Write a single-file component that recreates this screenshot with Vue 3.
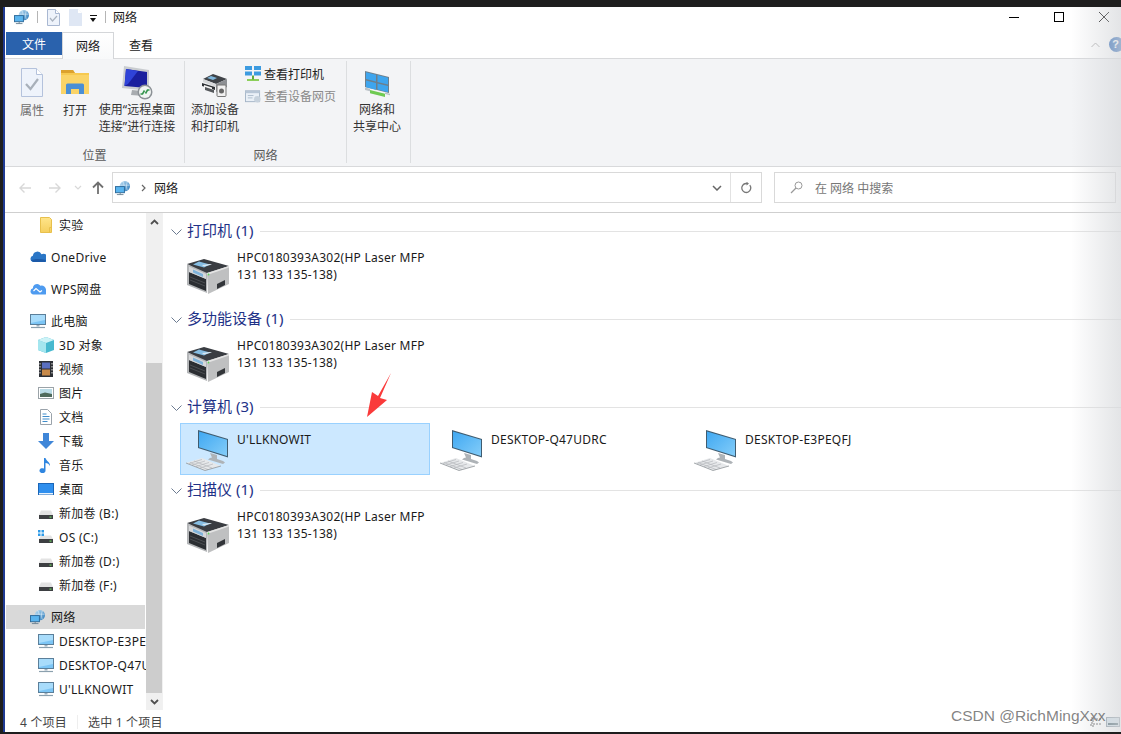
<script setup>
const quick = ['doc', 'page']
const tree = [
  { label: '实验', icon: 'folder', level: 2, gap: 8 },
  { label: 'OneDrive', icon: 'cloud', level: 1, gap: 8 },
  { label: 'WPS网盘', icon: 'wps', level: 1, gap: 8 },
  { label: '此电脑', icon: 'pc', level: 1 },
  { label: '3D 对象', icon: 'cube', level: 2 },
  { label: '视频', icon: 'film', level: 2 },
  { label: '图片', icon: 'picture', level: 2 },
  { label: '文档', icon: 'text', level: 2 },
  { label: '下载', icon: 'down', level: 2 },
  { label: '音乐', icon: 'note', level: 2 },
  { label: '桌面', icon: 'desk', level: 2 },
  { label: '新加卷 (B:)', icon: 'drive', level: 2 },
  { label: 'OS (C:)', icon: 'osdrive', level: 2 },
  { label: '新加卷 (D:)', icon: 'drive', level: 2 },
  { label: '新加卷 (F:)', icon: 'drive', level: 2, gap: 8 },
  { label: '网络', icon: 'net', level: 1, active: true },
  { label: 'DESKTOP-E3PEQFJ', icon: 'pc', level: 2 },
  { label: 'DESKTOP-Q47UDRC', icon: 'pc', level: 2 },
  { label: "U'LLKNOWIT", icon: 'pc', level: 2 }
]
const printer = { icon: 'printer', lines: ['HPC0180393A302(HP Laser MFP', '131 133 135-138)'] }
const groups = [
  { title: '打印机 (1)', items: [printer], cls: 'g-print' },
  { title: '多功能设备 (1)', items: [printer], cls: 'g-print' },
  {
    title: '计算机 (3)',
    cls: 'g-comp',
    items: [
      { icon: 'computer', lines: ["U'LLKNOWIT"], selected: true },
      { icon: 'computer', lines: ['DESKTOP-Q47UDRC'] },
      { icon: 'computer', lines: ['DESKTOP-E3PEQFJ'] }
    ]
  },
  { title: '扫描仪 (1)', items: [printer], cls: 'g-print' }
]
</script>

<template>
  <div class="screen">
    <svg class="defs" width="0" height="0" aria-hidden="true">
      <defs>
        <linearGradient id="scr" x1="0" y1="0" x2="1" y2="1"><stop offset="0" stop-color="#3fa8f2"/><stop offset="1" stop-color="#84cdf9"/></linearGradient>
        <linearGradient id="fold" x1="0" y1="0" x2="0" y2="1"><stop offset="0" stop-color="#ffe58a"/><stop offset="1" stop-color="#f5cf5e"/></linearGradient>
        <linearGradient id="glob" x1="0" y1="0" x2="1" y2="1"><stop offset="0" stop-color="#bfe0f5"/><stop offset="1" stop-color="#2a78b8"/></linearGradient>
        <symbol id="net" viewBox="0 0 17 16">
          <circle cx="10.500" cy="6" r="5.500" fill="url(#glob)"/>
          <path d="M8 1c2 2 2 6 1 9M13 1.500c-1 3-1 6 0 9M5.500 5h10" stroke="#e8f4fb" stroke-width=".6" fill="none"/>
          <rect x=".5" y="6.500" width="9.500" height="6.500" fill="#5ab4ee" stroke="#2d6a9a"/>
          <path d="M2 15h7M5.500 13v2" stroke="#6f8494"/>
        </symbol>
        <symbol id="doc" viewBox="0 0 13 17">
          <path d="M.5.500h8l4 4v12H.5z" fill="#eef3fb" stroke="#a9b8d2"/>
          <path d="M8.500.500v4h4" fill="#fff" stroke="#a9b8d2"/>
          <path d="M3 9l2.500 3L10 7" fill="none" stroke="#a9b3bf" stroke-width="1.200"/>
        </symbol>
        <symbol id="page" viewBox="0 0 13 17"><path d="M0 0h9l4 4v13H0z" fill="#dfe7f4"/><path d="M9 0v4h4" fill="#fff"/></symbol>
        <symbol id="propdoc" viewBox="0 0 22 29">
          <path d="M.5.500h15l6 6v22H.5z" fill="#eef3fb" stroke="#b4c2dc"/>
          <path d="M15.500.500v6h6" fill="#fff" stroke="#b4c2dc"/>
          <path d="M5 16l4.500 5L17 11" fill="none" stroke="#a8b0ba" stroke-width="2.200"/>
        </symbol>
        <symbol id="open" viewBox="0 0 28 24">
          <path d="M0 0h12l2 3h14v21H0z" fill="#fad468"/>
          <path d="M0 0h12l2 3H0z" fill="#dca22e"/>
          <path d="M0 3h28v2H0z" fill="#f6c950"/>
          <path d="M5 24v-9a1.500 1.500 0 0 1 1.500-1.500h15A1.500 1.500 0 0 1 23 15v9h-5v-5h-8v5z" fill="#4a8fd6"/>
        </symbol>
        <symbol id="remote" viewBox="0 0 32 35">
          <path d="M3 0l25 4v21L1 22z" fill="#c9ccd0"/>
          <path d="M5 3l21 3v16L3.500 20z" fill="#1a1f9e"/>
          <path d="M5 3l12 2-10 13-3.500 2z" fill="#2f43d8"/>
          <path d="M11 24l10 1 2 5-13-1z" fill="#a8acb0"/>
          <circle cx="24" cy="26" r="7.500" fill="#8c9196"/>
          <circle cx="24" cy="26" r="6" fill="#f0f4f2"/>
          <path d="M19.500 28h2l2-3.500M28.500 24h-2l-2 3.500" stroke="#33944c" stroke-width="1.600" fill="none"/>
        </symbol>
        <symbol id="addprinter" viewBox="0 0 26 23">
          <path d="M11 0l14 5-11 5L1 5z" fill="#3f4348"/>
          <path d="M9 2l6 2-4 2-6-2z" fill="#7fb6dc"/>
          <path d="M1 5l13 5v3L1 8z" fill="#d6d8da"/>
          <path d="M14 10l11-5v8l-11 5z" fill="#8d9094"/>
          <path d="M0 9l13 4v3L0 12z" fill="#2e3135"/>
          <path d="M2 11l8 2.500v2L2 13z" fill="#f4f4f4"/>
          <path d="M3 13l9 3v3l-9-3z" fill="#55585c"/>
          <rect x="15" y="11" width="9" height="11.500" rx="1" fill="#f1f1f1" stroke="#777"/>
          <circle cx="19.500" cy="17" r="2.500" fill="#666"/>
        </symbol>
        <symbol id="netgrid" viewBox="0 0 16 16">
          <path d="M0 0h7v4H0zM9 0h7v4H9zM0 5.500h7v4H0zM9 5.500h7v4H9z" fill="#3c9be0"/>
          <path d="M2 13h12v2H2z" fill="#8ccf5a"/><path d="M8 9.500v4" stroke="#5eaa3a" stroke-width="2"/>
        </symbol>
        <symbol id="webpage" viewBox="0 0 17 14">
          <rect x=".5" y="1.500" width="15" height="11.500" fill="#eaf0f7" stroke="#a4b4c6"/>
          <path d="M.5 1.500h15V4H.5z" fill="#b8c6d6"/>
          <path d="M3 6.500h6M3 9h5" stroke="#aebdcc"/>
          <circle cx="13" cy="10.500" r="3.500" fill="#c7d2dd"/>
        </symbol>
        <symbol id="sharing" viewBox="0 0 25 27">
          <path d="M0 0l24 6v16L0 16z" fill="#6d7f8c"/>
          <path d="M1 1.200l10 2.500v6.800L1 8zM12.500 4.100l10.500 2.600v6.800l-10.500-2.600zM1 9.500l10 2.500v6.800L1 16.300zM12.500 12.400l10.500 2.600v6.200l-10.500-2.600z" fill="#3ea5ee"/>
          <path d="M5 19l15 3.800v3.200L5 22.200z" fill="#6fca52"/>
          <path d="M0 16.500l5 1.300v2.500l-5-1.300zM20 21.500l5 1.300v1.500l-5-1.300z" fill="#b9c1c7"/>
        </symbol>
        <symbol id="folder" viewBox="0 0 16 16"><path d="M2.500.500h9l2 2v13h-11z" fill="url(#fold)" stroke="#e8c04c"/><path d="M11.500 15.500v-5h2" fill="none" stroke="#e8c04c"/></symbol>
        <symbol id="cloud" viewBox="0 0 16 16"><path d="M3.500 13a3.200 3.200 0 0 1-.6-6.300 4.500 4.500 0 0 1 8.600-1.400 3.900 3.900 0 0 1 4 7.700z" fill="#2a76c6"/><path d="M1 11.500c3-2 9-2 15-.5l-1 2H3.500z" fill="#1c5aa8"/></symbol>
        <symbol id="wps" viewBox="0 0 16 16"><path d="M3.500 13.500a3.200 3.200 0 0 1-.6-6.300 4.200 4.200 0 0 1 7.500-2.500 4.300 4.300 0 0 1 5.600 4.300 2.500 2.500 0 0 1-2 4.500z" fill="#4e9bf0"/><path d="M3.500 10l2.500-2.500 4 3.500 2-1.500" fill="none" stroke="#fff" stroke-width="1.200"/></symbol>
        <symbol id="pc" viewBox="0 0 16 16"><rect x=".5" y="1.500" width="15" height="10" fill="#7cc5f5" stroke="#5b7f9a"/><path d="M1 2h14v5L1 10z" fill="#a8dcfb"/><path d="M6.500 12h3v1.500h-3z" fill="#9cb0bf"/><path d="M1 14.500h14" stroke="#8ba0ae" stroke-width="1.200"/></symbol>
        <symbol id="cube" viewBox="0 0 16 16"><path d="M8 0l8 3v10l-8 3-8-3V3z" fill="#47b9cf"/><path d="M0 3l8 3v10l-8-3z" fill="#a4e6ef"/><path d="M8 0l8 3-8 3-8-3z" fill="#cdf3f7"/></symbol>
        <symbol id="film" viewBox="0 0 16 16"><rect x="1" y="0" width="14" height="16" fill="#2c2f35"/><rect x="4" y="1.500" width="8" height="6" fill="#5a6fc0"/><rect x="4" y="8.500" width="8" height="6" fill="#c88a4a"/><path d="M2 2v12M14 2v12" stroke="#ddd" stroke-dasharray="1.500 1.500"/></symbol>
        <symbol id="picture" viewBox="0 0 16 16"><rect x=".5" y="2.500" width="15" height="11" fill="#fff" stroke="#9ba3a8"/><rect x="2" y="4" width="12" height="8" fill="#b9dbe6"/><path d="M2 9l5-1.500 7 1.500v3H2z" fill="#4f6a5c"/></symbol>
        <symbol id="text" viewBox="0 0 16 16"><path d="M2.500.500h7l4 4v11h-11z" fill="#fff" stroke="#9aa3ab"/><path d="M4.500 5h4M4.500 7.500h7M4.500 10h7M4.500 12.500h5" stroke="#3f8ccb"/></symbol>
        <symbol id="down" viewBox="0 0 16 16"><path d="M5 0h6v8h5l-8 8-8-8h5z" fill="#3f86d8"/></symbol>
        <symbol id="note" viewBox="0 0 16 16"><path d="M6 1h1.500c.5 3 5 4 4.500 8-1-2-2.500-3-4.500-3v7.500a3 2.500 0 1 1-1.500-2z" fill="#2f86e0"/></symbol>
        <symbol id="desk" viewBox="0 0 16 16"><rect x=".5" y="2.500" width="15" height="11" fill="#2f8fee" stroke="#1b66b8"/><path d="M1 12h14v1.500H1z" fill="#e8f2fc"/></symbol>
        <symbol id="drive" viewBox="0 0 16 16"><path d="M3 5.500h10l2 4.500H1z" fill="#e3e3e3"/><rect x="1" y="10" width="14" height="4" fill="#3d3f42"/><rect x="11.500" y="11.500" width="2" height="1.200" fill="#6bd35f"/></symbol>
        <symbol id="osdrive" viewBox="0 0 16 16"><path d="M3 6.500h10l2 3.500H1z" fill="#e3e3e3"/><rect x="1" y="10" width="14" height="4" fill="#3d3f42"/><rect x="11.500" y="11.500" width="2" height="1.200" fill="#6bd35f"/><path d="M0 1h2.500v2.500H0zM3.500 1H6v2.500H3.500zM0 4.500h2.500V7H0zM3.500 4.500H6V7H3.500z" fill="#2f9be8"/></symbol>
        <symbol id="printer" viewBox="0 0 42 35">
          <path d="M17 0l25 7-21 8-3 0L0 5z" fill="#3a3d42"/>
          <path d="M12 2.500l11 3-6 3-11-3z" fill="#86bde2"/>
          <path d="M15 6l8-1 2 .6-8 2z" fill="#d9e6ef"/>
          <path d="M0 5l20 9v20L0 26z" fill="#b4b6b8"/>
          <path d="M20 14l22-7v18l-21 10z" fill="#bfc0c1"/>
          <path d="M20 14l22-7v1.500L20 16z" fill="#e4e4e4"/>
          <path d="M2 13l17 7v12L2 25z" fill="#2b2e32"/>
          <path d="M2 7.500l17 7.500v5L2 13z" fill="#d6d8da"/>
          <path d="M6 10.500l10 4.500v3L6 13.500z" fill="#7fb3da"/>
          <path d="M3 18l15 6M3 21l15 6" stroke="#54575b" stroke-width=".8"/>
          <path d="M30 25l8-4v5l-8 4z" fill="#33363a"/>
          <circle cx="21.500" cy="15.500" r=".9" fill="#5fd35a"/>
        </symbol>
        <symbol id="computer" viewBox="0 0 44 42">
          <path d="M12 0l30 9v18.500L12 18z" fill="#3f5c70"/>
          <path d="M13 1.400L41 9.800V26L13 17.200z" fill="url(#scr)"/>
          <path d="M24 23l7 2v4l6 2 2 1.500-2 1.500-15-4.500 2-1.500 2-.5z" fill="#aeb3b7"/>
          <path d="M0 33l16-5 19 8-16 4.500z" fill="#e6e8ea"/>
          <path d="M3 33.500l13-4M6 35l13-4M10 36.500l13-4M14 38l13-4M8 31l18 7M4 32.500l18 7" stroke="#b4b8bb" stroke-width=".7"/>
          <path d="M0 33l19 7.500 16-4.500" fill="none" stroke="#8f9498" stroke-width=".8"/>
        </symbol>
      </defs>
    </svg>

    <div class="window">
      <header class="titlebar">
        <svg class="i16 app"><use href="#net"/></svg>
        <span class="tsep"></span>
        <svg v-for="q in quick" :key="q" class="qa"><use :href="'#' + q"/></svg>
        <span class="drop"></span>
        <span class="tsep"></span>
        <span class="wtitle">网络</span>
        <div class="winbtns">
          <svg width="10" height="10"><path d="M0 5.500h10" stroke="#000"/></svg>
          <svg width="10" height="10"><rect x=".5" y=".5" width="9" height="9" fill="none" stroke="#000"/></svg>
          <svg width="10" height="10"><path d="M0 0l10 10M10 0L0 10" stroke="#000"/></svg>
        </div>
      </header>

      <nav class="tabs">
        <span class="tab file">文件</span>
        <span class="tab on">网络</span>
        <span class="tab">查看</span>
        <svg class="collapse" width="9" height="6"><path d="M.5 5L4.500 1l4 4" fill="none" stroke="#b0b0b0"/></svg>
        <span class="help">?</span>
      </nav>

      <section class="ribbon">
        <div class="rgroup g1">
          <div class="rbtns">
            <div class="rb b-prop"><svg class="ic-prop"><use href="#propdoc"/></svg><span class="muted">属性</span></div>
            <div class="rb b-open"><svg class="ic-open"><use href="#open"/></svg><span>打开</span></div>
            <div class="rb b-rem"><svg class="ic-rem"><use href="#remote"/></svg><span>使用“远程桌面<br>连接”进行连接</span></div>
          </div>
          <div class="rlabel">位置</div>
        </div>
        <div class="rgroup g2">
          <div class="rbtns">
            <div class="rb b-add"><svg class="ic-add"><use href="#addprinter"/></svg><span>添加设备<br>和打印机</span></div>
            <div class="rsmall">
              <div class="rs"><svg class="i16"><use href="#netgrid"/></svg>查看打印机</div>
              <div class="rs muted2"><svg class="i16"><use href="#webpage"/></svg>查看设备网页</div>
            </div>
          </div>
          <div class="rlabel">网络</div>
        </div>
        <div class="rgroup g3">
          <div class="rbtns">
            <div class="rb b-share"><svg class="ic-share"><use href="#sharing"/></svg><span>网络和<br>共享中心</span></div>
          </div>
        </div>
      </section>

      <div class="navbar">
        <div class="navbtns">
          <svg width="14" height="12"><path d="M13 6H2M6.500 1.500L2 6l4.500 4.500" fill="none" stroke="#d8d8d8" stroke-width="1.400"/></svg>
          <svg width="14" height="12"><path d="M1 6h11M7.500 1.500L12 6l-4.500 4.500" fill="none" stroke="#d8d8d8" stroke-width="1.400"/></svg>
          <svg width="8" height="6"><path d="M1 1l3 3 3-3" fill="none" stroke="#d8d8d8" stroke-width="1.200"/></svg>
          <svg width="12" height="14"><path d="M6 13V2M1 6.500L6 1.500l5 5" fill="none" stroke="#707070" stroke-width="1.800"/></svg>
        </div>
        <div class="address">
          <svg class="i16"><use href="#net"/></svg>
          <svg class="crumb" width="5" height="8"><path d="M1 1l3 3-3 3" fill="none" stroke="#666" stroke-width="1.200"/></svg>
          <span class="crumbtext">网络</span>
          <svg class="addrdrop" width="10" height="6"><path d="M1 1l4 4 4-4" fill="none" stroke="#666" stroke-width="1.500"/></svg>
          <span class="refresh">
            <svg width="12" height="12" viewBox="0 0 12 12"><path d="M9.800 3.200A4.500 4.500 0 1 1 6 1.500H8" fill="none" stroke="#777" stroke-width="1.300"/><path d="M6.500 0L9 1.500 6.500 3.500z" fill="#777"/></svg>
          </span>
        </div>
        <div class="search">
          <svg width="13" height="13"><circle cx="8.500" cy="4.500" r="3.500" fill="none" stroke="#999"/><path d="M6 7l-5 5" stroke="#999" stroke-width="1.200"/></svg>
          <span>在 网络 中搜索</span>
        </div>
      </div>

      <div class="body">
        <aside class="tree">
          <div class="treelist">
            <div v-for="t in tree" :key="t.label" class="row" :class="['lv' + t.level, { active: t.active, gapped: t.gap }]">
              <svg class="i16"><use :href="'#' + t.icon"/></svg>
              <span class="rowtext">{{ t.label }}</span>
            </div>
          </div>
          <div class="scroll">
            <span class="sarrow"><svg width="9" height="6"><path d="M1 5l3.500-3.500L8 5" fill="none" stroke="#505050" stroke-width="1.800"/></svg></span>
            <span class="strack"><span class="sthumb"></span></span>
            <span class="sarrow"><svg width="9" height="6"><path d="M1 1l3.500 3.500L8 1" fill="none" stroke="#505050" stroke-width="1.800"/></svg></span>
          </div>
        </aside>

        <main class="content">
          <section v-for="g in groups" :key="g.title" class="group" :class="g.cls">
            <h3 class="ghead">
              <svg width="11" height="6"><path d="M.5.500l5 5 5-5" fill="none" stroke="#6b7a90"/></svg>
              <span class="gtitle">{{ g.title }}</span>
              <i class="gline"></i>
            </h3>
            <div class="items">
              <div v-for="it in g.items" :key="it.lines[0]" class="item" :class="{ sel: it.selected }">
                <svg class="big" :class="it.icon"><use :href="'#' + it.icon"/></svg>
                <div class="itext"><div v-for="l in it.lines" :key="l">{{ l }}</div></div>
              </div>
            </div>
          </section>
        </main>
      </div>

      <footer class="status">
        <span>4 个项目</span><i class="ssep"></i><span>选中 1 个项目</span>
        <div class="views">
          <svg width="14" height="12"><path d="M2 2h3v3H2zM2 7h3v3H2zM7 3h6M7 8h6" fill="none" stroke="#666" stroke-dasharray="2 1"/></svg>
          <svg width="14" height="12"><rect x=".5" y="1.500" width="13" height="9" fill="#cfe0ea" stroke="#8a98a3"/><path d="M2 7h10v2H2z" fill="#43606b"/></svg>
        </div>
      </footer>
    </div>

    <div class="fade"></div>
    <svg class="redarrow" width="30" height="46" viewBox="0 0 30 46"><path d="M26 0L15 25l7 2L2 44 7 19l6 4z" fill="#fa3a3a"/></svg>
    <div class="mark">CSDN @RichMingXxx</div>
  </div>
</template>

<style scoped>
.screen {
  position: relative;
  width: 1121px;
  height: 734px;
  overflow: hidden;
  background: #1e1e1e;
  box-sizing: border-box;
  padding: 7px 0 2px 3px;
  font: 12px "Noto Sans", "Noto Sans CJK SC", sans-serif;
  color: #1a1a1a;
}
.defs { position: absolute; }
svg { display: block; flex: none; }
.i16 { width: 16px; height: 16px; }
.window {
  height: 725px;
  background: #fff;
  border-left: 2px solid #1f3a93;
  box-sizing: border-box;
  display: flex;
  flex-direction: column;
  overflow: hidden;
}
.titlebar {
  height: 25px;
  flex: none;
  display: flex;
  align-items: center;
  padding-left: 9px;
  padding-bottom: 5px;
  box-sizing: border-box;
}
.app { margin-right: 7px; }
.tsep { width: 1px; height: 12px; background: #b5b5b5; }
.qa { width: 13px; height: 17px; margin-left: 9px; }
.qa:last-of-type { margin-right: 0; }
.qa + .qa { margin-left: 9px; }
.drop {
  width: 7px; height: 7px; margin: 3px 8px 0 8px;
  border-top: 1px solid #111;
  box-sizing: border-box;
  position: relative;
}
.drop::after {
  content: ""; position: absolute; left: 0; top: 2px;
  border: 3.5px solid transparent; border-top: 4px solid #111; border-bottom: 0;
}
.wtitle { margin-left: 7px; font-size: 12px; }
.winbtns { margin-left: auto; display: flex; gap: 35px; padding-right: 11px; margin-right: 1px; }
.tabs {
  height: 26px;
  flex: none;
  display: flex;
  align-items: flex-start;
  position: relative;
  padding-left: 1px;
}
.tab { width: 54px; height: 25px; display: flex; align-items: center; justify-content: center; }
.tab.file { width: 56px; height: 23px; background: #2a62ad; color: #fff; }
.tab.on {
  width: 52px; height: 27px; box-sizing: border-box;
  background: linear-gradient(#fff, #f8f9fa);
  border: 1px solid #d4d6d9; border-bottom: 0; position: relative; z-index: 1;
}
.collapse { position: absolute; right: 21px; top: 10px; }
.help {
  position: absolute; right: -3px; top: 5px; width: 15px; height: 15px; border-radius: 50%;
  background: #1f5fb4; color: #fff; font: bold 11px/15px "Liberation Sans", sans-serif; text-align: center; text-indent: -2px;
}
.ribbon {
  height: 109px;
  flex: none;
  display: flex;
  background: #f3f4f6;
  border-top: 1px solid #d8d9db;
  border-bottom: 1px solid #d8d9db;
  box-sizing: border-box;
}
.rgroup {
  display: flex;
  flex-direction: column;
  border-right: 1px solid #dcdee0;
  margin: 2px 0 3px;
  color: #333;
}
.g1 { width: 179px; }
.g2 { width: 161px; }
.g3 { width: 63px; }
.rbtns { flex: 1; display: flex; position: relative; }
.rlabel { height: 17px; text-align: center; color: #5a5a5a; }
.rb { display: flex; flex-direction: column; align-items: center; line-height: 17px; text-align: center; white-space: nowrap; }
.rb svg { margin-bottom: 0; }
.muted { color: #6d6d6d; }
.b-prop { width: 54px; padding-top: 7px; }
.ic-prop { width: 22px; height: 29px; margin-bottom: 5px !important; }
.b-open { width: 32px; padding-top: 9px; }
.ic-open { width: 28px; height: 24px; margin-bottom: 8px !important; }
.b-rem { width: 92px; padding-top: 5px; }
.ic-rem { width: 32px; height: 35px; margin-bottom: 0 !important; }
.b-add { width: 60px; padding-top: 13px; }
.ic-add { width: 26px; height: 23px; margin-bottom: 4px !important; }
.rsmall { padding: 5px 0 0 0; display: flex; flex-direction: column; gap: 6px; }
.rs { height: 16px; display: flex; align-items: center; gap: 3px; color: #222; }
.muted2 { color: #8a8a8a; }
.b-share { width: 60px; padding-top: 10px; }
.ic-share { width: 25px; height: 27px; margin-bottom: 3px !important; }

.navbar {
  height: 46px;
  flex: none;
  display: flex;
  align-items: flex-start;
  padding-top: 5px;
  box-sizing: border-box;
  border-bottom: 1px solid #cfcfcf;
  gap: 12px;
}
.navbtns { width: 107px; height: 31px; display: flex; align-items: center; gap: 16px; padding-left: 13px; box-sizing: border-box; }
.navbtns svg:nth-child(3) { margin-left: -4px; }
.navbtns svg:nth-child(4) { margin-left: -6px; }
.address, .search {
  height: 31px;
  border: 1px solid #d9d9d9;
  box-sizing: border-box;
  display: flex;
  align-items: center;
  background: #fff;
}
.address { width: 650px; padding-left: 2px; margin-left: -12px; }
.crumb { margin-left: 10px; }
.crumbtext { margin-left: 8px; }
.addrdrop { margin-left: auto; margin-right: 8px; }
.refresh {
  width: 31px; height: 29px; border-left: 1px solid #e2e2e2;
  display: flex; align-items: center; justify-content: center; box-sizing: border-box;
}
.search { width: 342px; padding-left: 15px; gap: 12px; color: #777; }

.body { flex: 1; min-height: 0; display: flex; }
.tree { width: 157px; flex: none; display: flex; border-right: 1px solid #f1f1f1; }
.treelist { width: 141px; overflow: hidden; }
.row {
  height: 24px;
  display: flex;
  align-items: center;
  gap: 5px;
  white-space: nowrap;
  overflow: hidden;
  padding-left: 25px;
  letter-spacing: .28px;
  color: #1a1a1a;
}
.row.lv2 { padding-left: 33px; }
.row.gapped { margin-bottom: 8px; }
.row.active { background: #d9d9d9; margin: 0 0 0 1px; padding-left: 24px; width: 139px; box-sizing: border-box; }
.rowtext { flex: none; }
.scroll { width: 16px; display: flex; flex-direction: column; background: #f0f0f0; }
.sarrow { height: 17px; display: flex; align-items: center; justify-content: center; flex: none; }
.strack { flex: 1; display: flex; flex-direction: column; justify-content: flex-end; }
.sthumb { height: 330px; background: #cdcdcd; display: block; }

.content { flex: 1; min-width: 0; padding: 8px 0 0 8px; overflow: hidden; }
.group { margin: 0; }
.ghead {
  margin: 0;
  height: 21px;
  display: flex;
  align-items: center;
  gap: 5px;
  font-size: 14px;
  font-weight: 400;
  color: #1e3287;
}
.gtitle { padding-bottom: 2px; font-size: 15px; line-height: 19px; }
.gline { flex: 1; height: 1px; background: #e3e3e3; margin: 0 0 0 2px; }
.items { display: flex; gap: 4px; padding-left: 9px; }
.item {
  width: 250px;
  height: 52px;
  box-sizing: border-box;
  border: 1px solid transparent;
  position: relative;
  display: flex;
  padding-left: 56px;
  padding-top: 7px;
  line-height: 17px;
  letter-spacing: .25px;
}
.item.sel { background: #cce8ff; border-color: #99d1ff; }
.big { position: absolute; }
.big.printer { width: 42px; height: 35px; left: 6px; top: 13px; }
.big.computer { width: 44px; height: 42px; left: 5px; top: 6px; }
.g-print { height: 88px; }
.g-print .items { margin-top: 3px; }
.g-print .item { padding-top: 3px; }
.g-comp { height: 83px; }
.g-comp .items { margin-top: 5px; }
.itext { white-space: nowrap; }

.status {
  height: 22px;
  flex: none;
  display: flex;
  align-items: center;
  padding: 1px 0 0 15px;
  box-sizing: border-box;
  letter-spacing: .2px;
  color: #444;
  position: relative;
}
.ssep { width: 1px; height: 14px; background: #eee; margin: 0 10px; }
.views { position: absolute; right: 1px; top: 6px; display: flex; gap: 3px; }

.fade {
  position: absolute; right: 0; top: 7px; bottom: 2px; width: 50px; pointer-events: none;
  background: linear-gradient(90deg, rgba(215,217,220,0), rgba(215,217,220,.7));
}
.redarrow { position: absolute; left: 365px; top: 373px; }
.mark {
  position: absolute; left: 951px; top: 707px;
  font: 15.5px/18px "Liberation Sans", sans-serif; color: rgba(90,90,90,.75);
}
</style>

<style>
html, body { margin: 0; background: #1e1e1e; }
</style>
